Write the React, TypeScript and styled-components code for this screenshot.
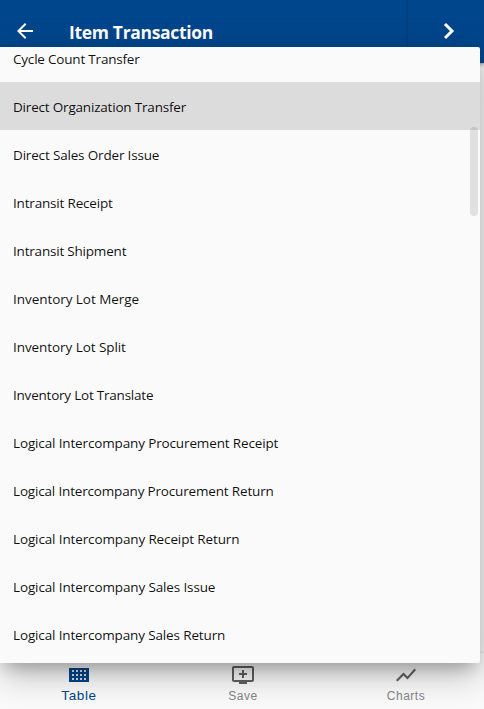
import React from "react";
import styled, { createGlobalStyle } from "styled-components";

const GlobalStyle = createGlobalStyle`
  * { box-sizing: border-box; }
  html, body { margin: 0; padding: 0; overflow: hidden; background: #fafafa; }
`;

const Screen = styled.div`
  position: relative;
  display: flex;
  flex-direction: column;
  width: 484px;
  height: 709px;
  overflow: hidden;
  background: #fafafa;
  font-family: "Open Sans", "Noto Sans", sans-serif;
`;

const Header = styled.header`
  display: flex;
  flex: 0 0 63px;
  background: #00468c;
  box-shadow: 0 2px 4px rgba(0, 0, 0, 0.3);
  z-index: 1;
`;

const TitleArea = styled.div`
  display: flex;
  align-items: center;
  flex: 1;
  padding: 0 0 2px 13px;
`;

const HeaderButton = styled.button`
  display: flex;
  padding: 0;
  border: 0;
  background: none;
  color: #fff;
`;

const NextButton = styled(HeaderButton)`
  width: 76px;
  align-items: center;
  justify-content: center;
  padding: 0 0 1px 6px;
  background: #00468c;
  box-shadow: 0 0 3px rgba(0, 0, 0, 0.3);
`;

const Title = styled.h1`
  margin: 3px 0 0 32px;
  color: #fff;
  font-size: 17.5px;
  font-weight: 700;
  line-height: 24px;
  letter-spacing: -0.32px;
  white-space: nowrap;
`;

const Content = styled.main`
  flex: 1;
  background: #f8f8f8;
`;

const BottomNav = styled.nav`
  display: flex;
  flex: 0 0 56px;
  justify-content: space-between;
  background: #fafafa;
  box-shadow: 0 -1px 2px rgba(0, 0, 0, 0.1);
`;

const NavItem = styled.button<{ $active?: boolean }>`
  display: flex;
  flex-direction: column;
  align-items: center;
  width: ${(p) => (p.$active ? "158px" : "156px")};
  padding: 10px 0 0;
  border: 0;
  background: none;
  color: ${(p) => (p.$active ? "#00468c" : "#858585")};
  font-family: "Liberation Sans", sans-serif;
  font-size: ${(p) => (p.$active ? "13.5px" : "12px")};
  line-height: 16px;
  letter-spacing: ${(p) => (p.$active ? "0.6px" : "0.5px")};

  svg {
    margin-bottom: 1px;
    color: ${(p) => (p.$active ? "#00468c" : "#606060")};
  }
`;

const Menu = styled.div`
  position: absolute;
  top: 47px;
  left: 0;
  width: 480px;
  height: 616px;
  border-radius: 0 2px 2px 0;
  background: #fafafa;
  box-shadow:
    0 11px 15px -7px rgba(0, 0, 0, 0.22),
    0 10px 36px 0 rgba(0, 0, 0, 0.28);
  z-index: 2;
`;

const ListFrame = styled.div`
  height: 100%;
  overflow: hidden;
  border-radius: 0 2px 2px 0;
`;

const List = styled.ul`
  margin: -13px 0 0;
  padding: 0;
  list-style: none;
`;

const Option = styled.li<{ $selected?: boolean; $spacing: number }>`
  display: flex;
  align-items: center;
  height: 48px;
  padding: 2px 13px 0;
  background: ${(p) => (p.$selected ? "#dcdcdc" : "transparent")};
  color: rgba(0, 0, 0, 0.94);
  font-size: 13.5px;
  letter-spacing: ${(p) => p.$spacing}px;
  white-space: nowrap;
`;

const ScrollThumb = styled.div`
  position: absolute;
  top: 80px;
  right: 2px;
  width: 8px;
  height: 89px;
  border-radius: 4px;
  background: rgba(0, 0, 0, 0.1);
`;

const options: { label: string; spacing: number }[] = [
  { label: "Cycle Count Transfer", spacing: -0.2 },
  { label: "Direct Organization Transfer", spacing: -0.19 },
  { label: "Direct Sales Order Issue", spacing: -0.17 },
  { label: "Intransit Receipt", spacing: -0.18 },
  { label: "Intransit Shipment", spacing: -0.2 },
  { label: "Inventory Lot Merge", spacing: -0.05 },
  { label: "Inventory Lot Split", spacing: -0.07 },
  { label: "Inventory Lot Translate", spacing: -0.22 },
  { label: "Logical Intercompany Procurement Receipt", spacing: -0.14 },
  { label: "Logical Intercompany Procurement Return", spacing: -0.17 },
  { label: "Logical Intercompany Receipt Return", spacing: -0.13 },
  { label: "Logical Intercompany Sales Issue", spacing: -0.13 },
  { label: "Logical Intercompany Sales Return", spacing: -0.14 },
];

const Icon = ({ d, size = 24 }: { d: string; size?: number }) => (
  <svg width={size} height={size} viewBox="0 0 24 24" fill="currentColor">
    <path d={d} />
  </svg>
);

const BACK = "M20 11H7.83l5.59-5.59L12 4l-8 8 8 8 1.41-1.41L7.83 13H20v-2z";
const ADD_TO_QUEUE =
  "M21 3H3c-1.11 0-2 .89-2 2v12c0 1.1.89 2 2 2h5v2h8v-2h5c1.1 0 1.99-.9 1.99-2L23 5c0-1.11-.9-2-2-2zm0 14H3V5h18v12zm-5-7v2h-3v3h-2v-3H8v-2h3V7h2v3h3z";
const CHART = "M3.5 18.49l6-6.01 4 4L22 6.92l-1.41-1.41-7.09 7.97-4-4L2 16.99z";

const TableIcon = () => (
  <svg width="20" height="24" viewBox="0 0 20 24">
    <rect y="5" width="20" height="14" fill="currentColor" />
    {[7, 11, 15].map((y) =>
      [3, 7, 11, 15].map((x) => (
        <rect key={`${x}-${y}`} x={x} y={y} width="2" height="2" fill="#dedede" />
      ))
    )}
  </svg>
);

export default function App() {
  return (
    <Screen>
      <GlobalStyle />
      <Header>
        <TitleArea>
          <HeaderButton aria-label="Back">
            <Icon d={BACK} />
          </HeaderButton>
          <Title>Item Transaction</Title>
        </TitleArea>
        <NextButton aria-label="Next">
          <svg width="12" height="18" viewBox="0 0 12 18" fill="none" stroke="currentColor" strokeWidth="3">
            <path d="M2 2l7 7-7 7" />
          </svg>
        </NextButton>
      </Header>
      <Content />
      <BottomNav>
        <NavItem $active>
          <TableIcon />
          Table
        </NavItem>
        <NavItem>
          <Icon d={ADD_TO_QUEUE} />
          Save
        </NavItem>
        <NavItem>
          <Icon d={CHART} />
          Charts
        </NavItem>
      </BottomNav>
      <Menu>
        <ListFrame>
          <List role="listbox">
            {options.map((o, i) => (
              <Option key={o.label} role="option" $selected={i === 1} $spacing={o.spacing}>
                {o.label}
              </Option>
            ))}
          </List>
        </ListFrame>
        <ScrollThumb />
      </Menu>
    </Screen>
  );
}
